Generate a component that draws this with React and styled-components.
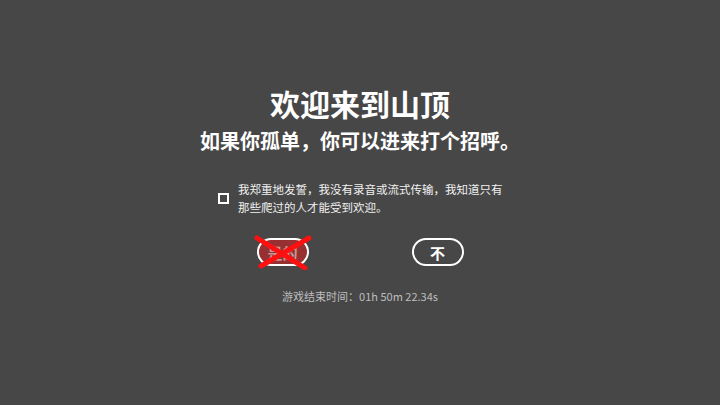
import React from "react";
import styled, { createGlobalStyle } from "styled-components";

const GlobalStyle = createGlobalStyle`
  html, body {
    margin: 0;
    padding: 0;
    background: #474747;
  }
  body {
    font-family: "Noto Sans CJK SC", "Noto Sans", sans-serif;
    color: #fff;
  }
`;

const Page = styled.div`
  width: 720px;
  height: 405px;
  display: flex;
  flex-direction: column;
  align-items: center;
  padding-top: 84px;
  box-sizing: border-box;
`;

const Title = styled.h1`
  margin: 0;
  font-size: 30px;
  line-height: 38px;
  font-weight: 700;
`;

const Subtitle = styled.h2`
  margin: 4px 0 0;
  font-size: 20px;
  line-height: 30px;
  font-weight: 700;
`;

const Pledge = styled.label`
  margin-top: 24px;
  display: flex;
  align-items: center;
  gap: 9px;
  width: 286px;
  margin-left: 2px;
`;

const Box = styled.span`
  flex: none;
  width: 7px;
  height: 7px;
  border: 2px solid #fff;
`;

const PledgeText = styled.p`
  margin: 0;
  font-size: 11.5px;
  line-height: 18px;
  color: #f0f0f0;
`;

const Actions = styled.div`
  margin-top: 22px;
  display: flex;
  gap: 103px;
`;

const Button = styled.button`
  position: relative;
  width: 52px;
  height: 28px;
  border: 2px solid #fff;
  border-radius: 14px;
  background: ${(p) => (p.$blocked ? "rgba(205, 35, 35, 0.6)" : "transparent")};
  color: ${(p) => (p.$blocked ? "rgba(255,255,255,0.5)" : "#fff")};
  font-family: inherit;
  font-size: 15px;
  font-weight: 700;
  padding: 0;
  display: flex;
  align-items: center;
  justify-content: center;
`;

const Cross = styled.svg`
  position: absolute;
  left: -6px;
  top: -6px;
  width: 60px;
  height: 36px;
  pointer-events: none;
`;

const Footer = styled.p`
  margin: 22px 0 0;
  font-size: 11px;
  color: #bdbdbd;
`;

export default function App() {
  return (
    <>
      <GlobalStyle />
      <Page>
        <Title>欢迎来到山顶</Title>
        <Subtitle>如果你孤单，你可以进来打个招呼。</Subtitle>
        <Pledge>
          <Box />
          <PledgeText>
            我郑重地发誓，我没有录音或流式传输，我知道只有那些爬过的人才能受到欢迎。
          </PledgeText>
        </Pledge>
        <Actions>
          <Button $blocked>
            是的
            <Cross viewBox="0 0 60 36">
              <path d="M4 4 L52 34" stroke="#ff1010" strokeWidth="5" strokeLinecap="round" />
              <path d="M56 4 L8 32" stroke="#ff1010" strokeWidth="5" strokeLinecap="round" />
            </Cross>
          </Button>
          <Button>不</Button>
        </Actions>
        <Footer>游戏结束时间：01h 50m 22.34s</Footer>
      </Page>
    </>
  );
}
